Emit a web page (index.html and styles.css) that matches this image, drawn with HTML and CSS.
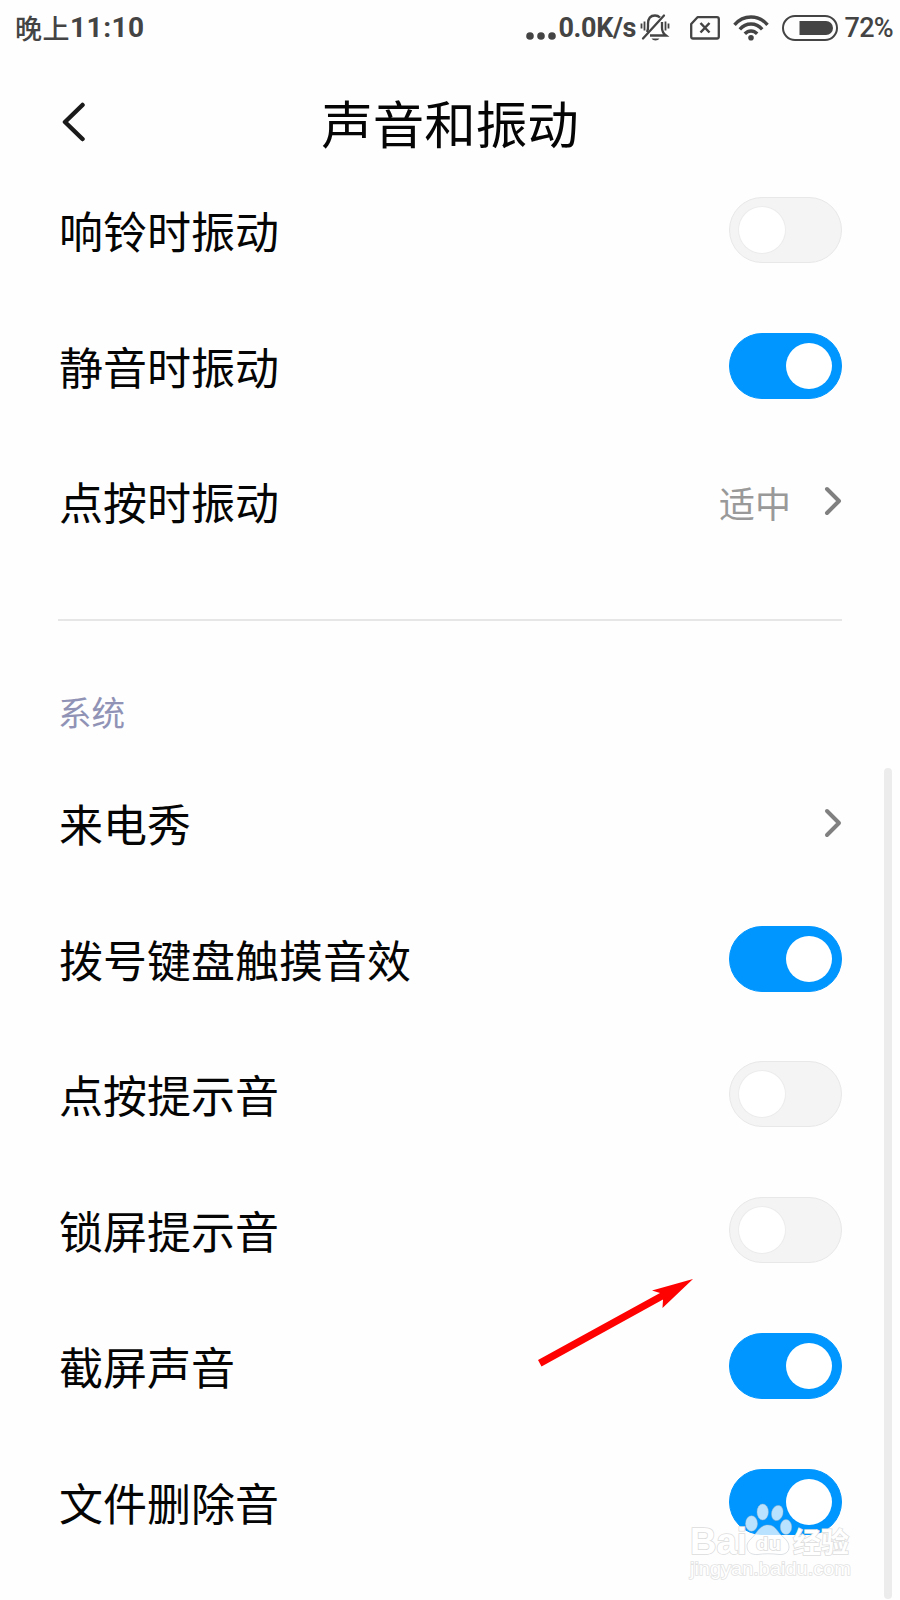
FILE: index.html
```html
<!DOCTYPE html>
<html lang="zh-CN">
  <head>
    <meta charset="UTF-8" />
    <meta name="viewport" content="width=device-width, initial-scale=1.0" />
    <title>声音和振动</title>
    <link rel="stylesheet" href="styles.css">
  </head>
  <body>
    <div class="statusbar">
      <span class="time"><span class="cjk">晚上</span>11:10</span>
      <div class="status">
        <svg class="dots" width="30" height="8" viewBox="0 0 30 8">
          <circle cx="4" cy="4" r="3.8" />
          <circle cx="15" cy="4" r="3.8" />
          <circle cx="26" cy="4" r="3.8" />
        </svg>
        <span class="speed">0.0K/s</span>
        <svg class="bell" width="30" height="30" viewBox="0 0 30 30" fill="none" stroke="#444" stroke-width="2.300">
          <path d="M7 19C8.500 16 8 14 8 11C8 5 11 2.500 15 2.500C17.500 2.500 19 3.500 20 4.500M22 9V15C22 19 24 21 26 22.500H10" />
          <path d="M3 25.500L24 2.500" stroke-linecap="round" />
          <path d="M11.500 25.500H19.500C18 28 13 28 11.500 25.500Z" fill="#444" stroke="none" />
          <path d="M1.500 10.500V15.500M4.500 8.500V17.500M25.500 8.500V17.500M28.500 10.500V15.500" stroke-width="1.800" />
        </svg>
        <svg class="sim" width="30" height="24" viewBox="0 0 30 24" fill="none" stroke="#444" stroke-width="2.300">
          <path d="M7.500 1.200H27Q28.800 1.200 28.800 3V20.500Q28.800 22.500 27 22.500H3Q1.200 22.500 1.200 20.500V8Z" stroke-linejoin="round" />
          <path d="M10.500 7L19.500 16.500M19.500 7L10.500 16.500" stroke-width="2.500" />
        </svg>
        <svg class="wifi" width="36" height="26" viewBox="0 0 36 26" fill="none" stroke="#444" stroke-width="3.400">
          <path d="M1.500 9.800C10.500 -.6 25.500 -.6 34.500 9.800" />
          <path d="M6.800 14.300C13 7.300 23 7.300 29.200 14.300" />
          <path d="M11.800 18.800C15.500 15 20.500 15 24.200 18.800" />
          <circle cx="18" cy="22.800" r="2.800" fill="#444" stroke="none" />
        </svg>
        <svg class="battery" width="56" height="26" viewBox="0 0 56 26">
          <rect x="1" y="1" width="54" height="24" rx="12" fill="none" stroke="#444" stroke-width="2" />
          <path d="M17.500 6H44A7 7 0 0 1 44 20H17.500Z" fill="#444" />
        </svg>
        <span class="percent">72%</span>
      </div>
    </div>

    <header class="header">
      <svg class="back" width="24" height="40" viewBox="0 0 24 40">
        <path d="M20.500 3L3 20L20.500 37" />
      </svg>
      <h1>声音和振动</h1>
    </header>

    <main>
      <section class="list">
        <div class="row"><span>响铃时振动</span><i class="switch"></i></div>
        <div class="row"><span>静音时振动</span><i class="switch on"></i></div>
        <div class="row">
          <span>点按时振动</span>
          <div class="more">
            <span class="value">适中</span>
            <svg class="chevron" width="18" height="30" viewBox="0 0 18 30"><path d="M3 3L15 15L3 27" /></svg>
          </div>
        </div>
      </section>

      <section class="list system">
        <h2>系统</h2>
        <div class="row">
          <span>来电秀</span>
          <svg class="chevron" width="18" height="30" viewBox="0 0 18 30"><path d="M3 3L15 15L3 27" /></svg>
        </div>
        <div class="row"><span>拨号键盘触摸音效</span><i class="switch on"></i></div>
        <div class="row"><span>点按提示音</span><i class="switch"></i></div>
        <div class="row"><span>锁屏提示音</span><i class="switch"></i></div>
        <div class="row"><span>截屏声音</span><i class="switch on"></i></div>
        <div class="row"><span>文件删除音</span><i class="switch on"></i></div>
      </section>
    </main>

    <div class="scrollbar"></div>

    <svg class="arrow" width="160" height="92" viewBox="0 0 160 92">
      <path d="M0 84L122 17L114 14.500L155 3L124.500 32L125 23.500L3.500 90.500Z" fill="#fe0202" />
    </svg>

    <!-- watermark -->
    <svg class="watermark" width="200" height="90" viewBox="0 50 200 90">
      <g class="paw">
        <ellipse cx="81.500" cy="73.500" rx="6" ry="7.700" />
        <ellipse cx="92.700" cy="62" rx="5.700" ry="8" />
        <ellipse cx="107.300" cy="63" rx="5.700" ry="7.700" transform="rotate(15 107.300 63)" />
        <ellipse cx="116" cy="77" rx="5.700" ry="7.500" />
        <path d="M98 75C104 75 107 80 110 84C114 88 119 91 119 97C119 102 115 105 109 104.500C102 103.500 94 103.500 88 104.500C81 105 77 102 77 96C77 91 83 88 86 83C89 79 92 75 98 75Z" />
      </g>
      <text class="latin" x="20" y="104" font-size="36" textLength="57" lengthAdjust="spacingAndGlyphs">Bai</text>
      <text class="du" x="86" y="100" font-size="18" textLength="25" lengthAdjust="spacingAndGlyphs">du</text>
      <text class="han" x="123" y="103" font-size="28">经验</text>
      <text class="url" x="20" y="125" font-size="19" textLength="161" lengthAdjust="spacingAndGlyphs">jingyan.baidu.com</text>
    </svg>
  </body>
</html>
```
FILE: styles.css
```css
body {
  position: relative;
  margin: 0;
  width: 900px;
  height: 1600px;
  overflow: hidden;
  background-color: #fefefe;
  color: #050505;
  font-family: Roboto, "Noto Sans CJK SC", sans-serif;
}

.statusbar {
  display: flex;
  justify-content: space-between;
  align-items: center;
  height: 56px;
  padding: 0 7px 0 15px;
  box-sizing: border-box;
  color: #444;
  font-size: 28px;
  line-height: 56px;
}
.time {
  display: flex;
  font-weight: 700;
  letter-spacing: 0.5px;
}
.cjk {
  font-family: "Noto Sans CJK SC", sans-serif;
  font-size: 27px;
  font-weight: 500;
}
.status {
  display: flex;
  align-items: center;
}
.dots {
  fill: #444;
  margin-top: 15px;
}
.speed {
  font-size: 27px;
  font-weight: 700;
  letter-spacing: -0.4px;
  width: 81px;
  margin-left: 3px;
}
.bell {
  margin-right: 20px;
}
.sim {
  margin-right: 13px;
}
.wifi {
  margin-right: 13px;
}
.battery {
  margin-right: 7px;
}
.percent {
  font-size: 27px;
  font-weight: 500;
  letter-spacing: -0.7px;
}

.header {
  display: grid;
  grid-template-columns: 40px 1fr 40px;
  align-items: center;
  height: 106px;
  padding: 26px 60px 0;
  box-sizing: border-box;
}
.back {
  margin-left: 1.5px;
  fill: none;
  stroke: #1a1a1a;
  stroke-width: 4.5;
  stroke-linecap: round;
  stroke-linejoin: round;
}
h1 {
  margin: 0;
  text-align: center;
  font-family: "Noto Sans CJK SC", sans-serif;
  font-size: 51.5px;
  font-weight: 400;
  line-height: 80px;
}

.list {
  margin: 0 58px;
  padding-bottom: 49.6px;
}
.system {
  border-top: 2px solid #e6e6e6;
}
h2 {
  margin: 0;
  padding: 74px 0 26px;
  color: #9093b5;
  font-family: "Noto Sans CJK SC", sans-serif;
  font-size: 33.6px;
  font-weight: 400;
  line-height: 34px;
}
.row {
  display: flex;
  justify-content: space-between;
  align-items: center;
  height: 135.8px;
  padding-left: 1px;
  font-family: "Noto Sans CJK SC", sans-serif;
  font-size: 44px;
  line-height: 60px;
}
.more {
  display: flex;
  align-items: center;
  gap: 33px;
}
.value {
  padding-top: 2px;
  color: #999;
  font-size: 36px;
}
.chevron {
  fill: none;
  stroke: #808080;
  stroke-width: 4;
  stroke-linecap: round;
  stroke-linejoin: round;
}

.switch {
  display: flex;
  align-items: center;
  width: 113px;
  height: 66px;
  padding: 0 9px;
  box-sizing: border-box;
  border: 1px solid #e8e8e8;
  border-radius: 33px;
  background-color: #f4f4f4;
}
.switch::before {
  content: "";
  width: 46px;
  height: 46px;
  border-radius: 50%;
  background-color: #fff;
  box-shadow: 0 0 0 1px #ececec;
}
.switch.on {
  justify-content: flex-end;
  border-color: #0096ff;
  background-color: #0096ff;
}
.switch.on::before {
  box-shadow: none;
}

.scrollbar {
  position: absolute;
  top: 768px;
  left: 884px;
  width: 8px;
  height: 831px;
  border-radius: 4px;
  background-color: #ececec;
}
.arrow {
  position: absolute;
  top: 1276px;
  left: 538px;
}

.watermark {
  position: absolute;
  top: 1500px;
  left: 670px;
  fill: #fff;
  stroke: #dcdcdc;
  stroke-width: 1.5;
  font-family: "Liberation Sans", sans-serif;
}
.watermark text {
  paint-order: stroke;
}
.watermark .latin,
.watermark .du {
  font-weight: 700;
}
.watermark .han {
  font-family: "Noto Sans CJK SC", sans-serif;
  font-weight: 700;
}
.watermark .url {
  stroke: #e2e2e2;
}
.paw {
  fill: rgba(255, 255, 255, 0.72);
  stroke: rgba(170, 180, 190, 0.4);
  stroke-width: 1;
}
```
